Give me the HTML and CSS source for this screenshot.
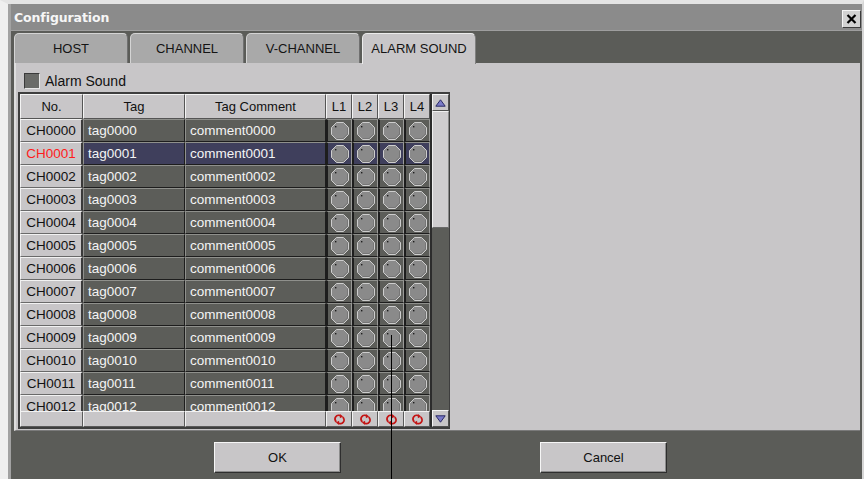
FILE: index.html
```html
<!DOCTYPE html>
<html lang="en">
<head>
<meta charset="utf-8">
<title>Configuration</title>
<link rel="stylesheet" href="styles.css">
</head>
<body>
<svg class="defs" width="0" height="0" aria-hidden="true">
  <symbol id="led" viewBox="0 0 18 18">
    <polygon points="5.5,0.5 12.5,0.5 17.5,5.5 17.5,12.5 12.5,17.5 5.5,17.5 0.5,12.5 0.5,5.5" fill="#8a8a8a" stroke="#cdcdcd" stroke-width="1"/>
    <polyline points="16.5,6 16.5,12 12,16.5 6,16.5" fill="none" stroke="#767676" stroke-width="1"/>
    <rect x="4" y="4" width="1.4" height="1.4" fill="#1c1c1c"/>
  </symbol>
  <symbol id="reset" viewBox="0 0 12 12">
    <path d="M2.6 8.6 A4 4 0 0 1 7.6 2.3" fill="none" stroke="#c41414" stroke-width="2"/>
    <path d="M9.4 3.4 A4 4 0 0 1 4.4 9.7" fill="none" stroke="#c41414" stroke-width="2"/>
    <polygon points="6.4,0 10,2.6 6.4,4.6" fill="#c41414"/>
    <polygon points="5.6,12 2,9.4 5.6,7.4" fill="#c41414"/>
  </symbol>
</svg>

<div class="frame">
  <div class="window">
    <div class="titlebar">
      <span class="title">Configuration</span>
      <button class="close" type="button" aria-label="Close">
        <svg width="11" height="10" viewBox="0 0 11 10"><path d="M1.5 1 L9.5 9 M9.5 1 L1.5 9" stroke="#000" stroke-width="2.2"/></svg>
      </button>
    </div>

    <div class="content">
      <div class="tabs">
        <div class="tab">HOST</div>
        <div class="tab">CHANNEL</div>
        <div class="tab">V-CHANNEL</div>
        <div class="tab active">ALARM SOUND</div>
      </div>

      <div class="panel">
        <label class="check"><span class="box"></span><span>Alarm Sound</span></label>

        <div class="grid">
          <div class="table">
            <div class="row head">
              <div class="ch">No.</div>
              <div class="ch">Tag</div>
              <div class="ch">Tag Comment</div>
              <div class="ch">L1</div>
              <div class="ch">L2</div>
              <div class="ch">L3</div>
              <div class="ch">L4</div>
            </div>

            <div class="rows">
              <div class="row"><div class="c-no">CH0000</div><div class="c-dk">tag0000</div><div class="c-dk">comment0000</div><div class="c-led"><svg class="led"><use href="#led"/></svg></div><div class="c-led"><svg class="led"><use href="#led"/></svg></div><div class="c-led"><svg class="led"><use href="#led"/></svg></div><div class="c-led"><svg class="led"><use href="#led"/></svg></div></div>
              <div class="row sel"><div class="c-no">CH0001</div><div class="c-dk">tag0001</div><div class="c-dk">comment0001</div><div class="c-led"><svg class="led"><use href="#led"/></svg></div><div class="c-led"><svg class="led"><use href="#led"/></svg></div><div class="c-led"><svg class="led"><use href="#led"/></svg></div><div class="c-led"><svg class="led"><use href="#led"/></svg></div></div>
              <div class="row"><div class="c-no">CH0002</div><div class="c-dk">tag0002</div><div class="c-dk">comment0002</div><div class="c-led"><svg class="led"><use href="#led"/></svg></div><div class="c-led"><svg class="led"><use href="#led"/></svg></div><div class="c-led"><svg class="led"><use href="#led"/></svg></div><div class="c-led"><svg class="led"><use href="#led"/></svg></div></div>
              <div class="row"><div class="c-no">CH0003</div><div class="c-dk">tag0003</div><div class="c-dk">comment0003</div><div class="c-led"><svg class="led"><use href="#led"/></svg></div><div class="c-led"><svg class="led"><use href="#led"/></svg></div><div class="c-led"><svg class="led"><use href="#led"/></svg></div><div class="c-led"><svg class="led"><use href="#led"/></svg></div></div>
              <div class="row"><div class="c-no">CH0004</div><div class="c-dk">tag0004</div><div class="c-dk">comment0004</div><div class="c-led"><svg class="led"><use href="#led"/></svg></div><div class="c-led"><svg class="led"><use href="#led"/></svg></div><div class="c-led"><svg class="led"><use href="#led"/></svg></div><div class="c-led"><svg class="led"><use href="#led"/></svg></div></div>
              <div class="row"><div class="c-no">CH0005</div><div class="c-dk">tag0005</div><div class="c-dk">comment0005</div><div class="c-led"><svg class="led"><use href="#led"/></svg></div><div class="c-led"><svg class="led"><use href="#led"/></svg></div><div class="c-led"><svg class="led"><use href="#led"/></svg></div><div class="c-led"><svg class="led"><use href="#led"/></svg></div></div>
              <div class="row"><div class="c-no">CH0006</div><div class="c-dk">tag0006</div><div class="c-dk">comment0006</div><div class="c-led"><svg class="led"><use href="#led"/></svg></div><div class="c-led"><svg class="led"><use href="#led"/></svg></div><div class="c-led"><svg class="led"><use href="#led"/></svg></div><div class="c-led"><svg class="led"><use href="#led"/></svg></div></div>
              <div class="row"><div class="c-no">CH0007</div><div class="c-dk">tag0007</div><div class="c-dk">comment0007</div><div class="c-led"><svg class="led"><use href="#led"/></svg></div><div class="c-led"><svg class="led"><use href="#led"/></svg></div><div class="c-led"><svg class="led"><use href="#led"/></svg></div><div class="c-led"><svg class="led"><use href="#led"/></svg></div></div>
              <div class="row"><div class="c-no">CH0008</div><div class="c-dk">tag0008</div><div class="c-dk">comment0008</div><div class="c-led"><svg class="led"><use href="#led"/></svg></div><div class="c-led"><svg class="led"><use href="#led"/></svg></div><div class="c-led"><svg class="led"><use href="#led"/></svg></div><div class="c-led"><svg class="led"><use href="#led"/></svg></div></div>
              <div class="row"><div class="c-no">CH0009</div><div class="c-dk">tag0009</div><div class="c-dk">comment0009</div><div class="c-led"><svg class="led"><use href="#led"/></svg></div><div class="c-led"><svg class="led"><use href="#led"/></svg></div><div class="c-led"><svg class="led"><use href="#led"/></svg></div><div class="c-led"><svg class="led"><use href="#led"/></svg></div></div>
              <div class="row"><div class="c-no">CH0010</div><div class="c-dk">tag0010</div><div class="c-dk">comment0010</div><div class="c-led"><svg class="led"><use href="#led"/></svg></div><div class="c-led"><svg class="led"><use href="#led"/></svg></div><div class="c-led"><svg class="led"><use href="#led"/></svg></div><div class="c-led"><svg class="led"><use href="#led"/></svg></div></div>
              <div class="row"><div class="c-no">CH0011</div><div class="c-dk">tag0011</div><div class="c-dk">comment0011</div><div class="c-led"><svg class="led"><use href="#led"/></svg></div><div class="c-led"><svg class="led"><use href="#led"/></svg></div><div class="c-led"><svg class="led"><use href="#led"/></svg></div><div class="c-led"><svg class="led"><use href="#led"/></svg></div></div>
              <div class="row"><div class="c-no">CH0012</div><div class="c-dk">tag0012</div><div class="c-dk">comment0012</div><div class="c-led"><svg class="led"><use href="#led"/></svg></div><div class="c-led"><svg class="led"><use href="#led"/></svg></div><div class="c-led"><svg class="led"><use href="#led"/></svg></div><div class="c-led"><svg class="led"><use href="#led"/></svg></div></div>
            </div>

            <div class="row foot">
              <div class="cf"></div>
              <div class="cf"></div>
              <div class="cf"></div>
              <div class="cf"><svg class="reset"><use href="#reset"/></svg></div>
              <div class="cf"><svg class="reset"><use href="#reset"/></svg></div>
              <div class="cf"><svg class="reset"><use href="#reset"/></svg></div>
              <div class="cf"><svg class="reset"><use href="#reset"/></svg></div>
            </div>
          </div>

          <div class="vscroll">
            <div class="sb-btn"><svg width="11" height="8" viewBox="0 0 11 8"><polygon points="5.5,0.8 10.2,7.2 0.8,7.2" fill="#7a7ac8" stroke="#2a2a66" stroke-width="1"/></svg></div>
            <div class="sb-thumb"></div>
            <div class="sb-track"></div>
            <div class="sb-btn"><svg width="11" height="8" viewBox="0 0 11 8"><polygon points="0.8,0.8 10.2,0.8 5.5,7.2" fill="#7a7ac8" stroke="#2a2a66" stroke-width="1"/></svg></div>
          </div>
        </div>
      </div>

      <div class="actions">
        <button class="btn" type="button">OK</button>
        <button class="btn" type="button">Cancel</button>
      </div>
    </div>
  </div>
</div>

<div class="pointer-line"></div>
</body>
</html>
```

FILE: styles.css
```css
* { box-sizing: border-box; }

html, body {
  margin: 0;
  padding: 0;
}

body {
  position: relative;
  width: 864px;
  height: 479px;
  overflow: hidden;
  background: #5b5c58;
  font-family: "Liberation Sans", Arial, sans-serif;
  font-size: 13px;
  color: #111;
}

.defs { position: absolute; width: 0; height: 0; overflow: hidden; }

/* outer window frame */
.frame {
  height: 479px;
  border-top: 4px solid #e4e4e4;
  border-left: 8px solid #efefef;
  border-right: 2px solid #d6d6d6;
}

.window {
  height: 100%;
  border-left: 3px solid #a2a2a2;
  display: flex;
  flex-direction: column;
}

/* title bar */
.titlebar {
  height: 27px;
  flex: none;
  background: #8b8b8b;
  border-bottom: 1px solid #9e9e9e;
  display: flex;
  align-items: center;
  justify-content: space-between;
  padding: 0 1px 0 3px;
}

.title {
  font-family: "DejaVu Sans", Verdana, sans-serif;
  font-weight: bold;
  font-size: 12.5px;
  color: #f6f6f6;
  letter-spacing: -0.1px;
}

.close {
  align-self: flex-end;
  margin-bottom: 2px;
  width: 19px;
  height: 18px;
  padding: 0;
  background: #d2d2d2;
  border: 1px solid;
  border-color: #f6f6f6 #3c3c3c #3c3c3c #f6f6f6;
  display: flex;
  align-items: center;
  justify-content: center;
}

/* client area */
.content {
  flex: 1;
  display: flex;
  flex-direction: column;
  padding: 2px 2px 0 3px;
}

.tabs {
  display: flex;
  gap: 2px;
  height: 30px;
  flex: none;
}

.tab {
  width: 114px;
  height: 30px;
  background: #a9a9a9;
  border: 1px solid;
  border-bottom: none;
  border-color: #d4d4d4 #707070 transparent #d4d4d4;
  border-radius: 5px 5px 0 0;
  text-align: center;
  line-height: 29px;
  font-size: 13px;
  color: #141414;
}

.tab.active {
  height: 31px;
  margin-bottom: -1px;
  position: relative;
  background: #c8c6c8;
  border-color: #ececec #808080 transparent #ececec;
}

.panel {
  height: 368px;
  flex: none;
  background: #c8c6c8;
  border-left: 2px solid #dedede;
  border-bottom: 1px solid #7a7a7a;
  padding-left: 2px;
}

.check {
  display: flex;
  align-items: center;
  gap: 5px;
  height: 29px;
  padding: 10px 0 3px 6px;
  font-size: 14px;
  color: #111;
}

.box {
  width: 16px;
  height: 16px;
  background: #6a6b68;
  border: 1px solid;
  border-color: #3a3a3a #e8e8e8 #e8e8e8 #3a3a3a;
}

/* data grid */
.grid {
  display: flex;
  width: max-content;
  border: 2px solid #3e3e3e;
  border-right-width: 1px;
}

.table {
  display: flex;
  flex-direction: column;
  width: 410px;
}

.row {
  display: grid;
  grid-template-columns: 63px 102px 141px 26px 26px 26px 26px;
  height: 23px;
  flex: none;
  font-size: 13.5px;
}

.row.head { height: 25px; font-size: 13px; }

.ch {
  background: #c8c6c8;
  border: 1px solid;
  border-color: #f4f4f4 #555 #555 #f4f4f4;
  text-align: center;
  line-height: 23px;
  color: #111;
}

.rows {
  height: 292px;
  overflow: hidden;
  display: flex;
  flex-direction: column;
}

.c-no {
  background: #c8c6c8;
  border-top: 1px solid #f2f2f2;
  border-left: 1px solid #f2f2f2;
  border-right: 2px solid #3a3a3a;
  border-bottom: 1px solid #6a6a6a;
  text-align: center;
  line-height: 21px;
  color: #111;
}

.c-dk,
.c-led {
  background: #5c5d59;
  border-top: 1px solid #8f908c;
  border-left: 1px solid #8f908c;
  border-right: 1px solid #1d1d1d;
  border-bottom: 1px solid #1d1d1d;
}

.c-dk {
  padding-left: 4px;
  line-height: 21px;
  color: #f4f4f4;
  white-space: nowrap;
  overflow: hidden;
}

.c-led {
  display: flex;
  align-items: center;
  justify-content: center;
  border-left: 2px solid #1d1d1d;
  border-right: 1px solid #9a9a98;
}

.led {
  width: 18px;
  height: 18px;
}

.row.sel .c-dk,
.row.sel .c-led { background: #3f3f5c; }

.row.sel .c-no { color: #ff1c1c; }

.row.foot { height: 16px; }

.cf {
  background: #c8c6c8;
  border: 1px solid;
  border-color: #f2f2f2 #5a5a5a #5a5a5a #f2f2f2;
  display: flex;
  align-items: center;
  justify-content: center;
}

.reset {
  width: 11px;
  height: 11px;
}

/* vertical scroll bar */
.vscroll {
  width: 19px;
  display: flex;
  flex-direction: column;
  background: #5c5d59;
  border-left: 2px solid #2c2c2c;
}

.sb-btn {
  height: 17px;
  flex: none;
  background: #c8c6c8;
  border: 1px solid;
  border-color: #f4f4f4 #505050 #505050 #f4f4f4;
  display: flex;
  align-items: center;
  justify-content: center;
}

.sb-thumb {
  height: 117px;
  flex: none;
  background: #cfcdcf;
  border: 1px solid;
  border-color: #f0f0f0 #8a8a8a #6a6a6a #f0f0f0;
}

.sb-track { flex: 1; }

/* dialog buttons */
.actions {
  display: flex;
  gap: 199px;
  padding: 11px 0 0 200px;
}

.btn {
  width: 127px;
  height: 31px;
  background: #c8c6c8;
  border: 1px solid;
  border-color: #f6f6f6 #2e2e2e #2e2e2e #f6f6f6;
  box-shadow: inset -1px -1px 0 #8c8c8c;
  font-family: "Liberation Sans", Arial, sans-serif;
  font-size: 13px;
  color: #111;
  padding: 0;
}

.pointer-line {
  position: absolute;
  left: 391px;
  top: 335px;
  width: 1px;
  height: 144px;
  background: #000;
}
```
